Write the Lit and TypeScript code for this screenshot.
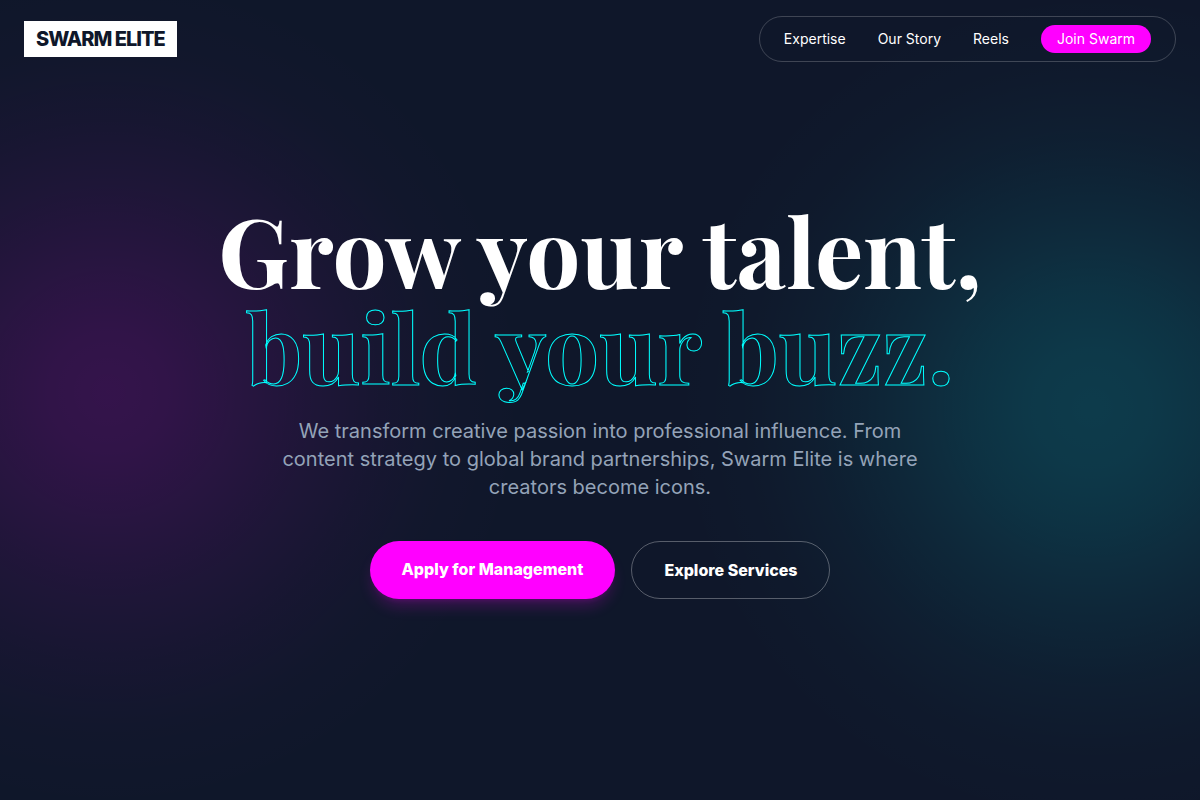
import { LitElement, html, css } from "lit";
import { customElement } from "lit/decorators.js";

@customElement("app-root")
export class AppRoot extends LitElement {
  static styles = css`
    :host {
      display: block;
      font-family: Inter, "Liberation Sans", sans-serif;
      color: #fff;
    }
    * {
      box-sizing: border-box;
    }
    a {
      color: inherit;
      text-decoration: none;
    }
    .page {
      display: grid;
      min-height: 100vh;
      background:
        radial-gradient(
          circle at 9% 49%,
          rgba(255, 0, 255, 0.155),
          rgba(255, 0, 255, 0.14) 60px,
          rgba(255, 0, 255, 0.11) 120px,
          rgba(255, 0, 255, 0.066) 200px,
          rgba(255, 0, 255, 0.034) 270px,
          rgba(255, 0, 255, 0.012) 340px,
          rgba(255, 0, 255, 0) 420px
        ),
        radial-gradient(
          circle at 91% 51%,
          rgba(0, 255, 255, 0.155),
          rgba(0, 255, 255, 0.145) 60px,
          rgba(0, 255, 255, 0.118) 120px,
          rgba(0, 255, 255, 0.072) 200px,
          rgba(0, 255, 255, 0.036) 270px,
          rgba(0, 255, 255, 0.013) 340px,
          rgba(0, 255, 255, 0) 420px
        ),
        #0f172a;
    }
    .header {
      grid-area: 1 / 1;
      align-self: start;
      display: flex;
      flex-wrap: wrap;
      gap: 16px;
      align-items: center;
      justify-content: space-between;
      padding: 16px 24px;
      z-index: 1;
    }
    .logo {
      padding: 4px 12px;
      background: #fff;
      color: #0f172a;
      font-size: 20px;
      line-height: 28px;
      font-weight: 800;
      letter-spacing: -1px;
    }
    .nav {
      display: flex;
      align-items: center;
      gap: 32px;
      padding: 8px 24px;
      border: 1px solid rgba(255, 255, 255, 0.2);
      border-radius: 24px;
      font-size: 14px;
      line-height: 20px;
    }
    .join {
      padding: 4px 16px;
      border-radius: 14px;
      background: #f0f;
    }
    .hero {
      grid-area: 1 / 1;
      display: flex;
      flex-direction: column;
      align-items: center;
      justify-content: center;
      padding: 80px 24px;
      text-align: center;
    }
    .title {
      margin: 0 0 24px;
      font-family: "Playfair Display", "DM Serif Display", "Liberation Serif", serif;
      font-size: 96px;
      line-height: 96px;
      font-weight: 700;
    }
    .line {
      display: block;
    }
    .outline {
      color: transparent;
      -webkit-text-stroke: 1px #00ffff;
    }
    .lead {
      max-width: 672px;
      margin: 0 0 40px;
      color: #94a3b8;
      font-size: 20px;
      line-height: 28px;
    }
    .actions {
      display: flex;
      flex-wrap: wrap;
      justify-content: center;
      gap: 16px;
      font-size: 16px;
      line-height: 24px;
      font-weight: 800;
    }
    .primary,
    .secondary {
      padding: 16px 32px;
      border-radius: 29px;
    }
    .primary {
      background: #f0f;
      box-shadow: 0 10px 15px -3px rgba(255, 0, 255, 0.2), 0 4px 6px -4px rgba(255, 0, 255, 0.2);
    }
    .secondary {
      border: 1px solid rgba(255, 255, 255, 0.3);
    }
  `;

  render() {
    return html`
      <div class="page">
        <header class="header">
          <a class="logo" href="#">SWARM ELITE</a>
          <nav class="nav" aria-label="Main">
            <a href="#expertise">Expertise</a>
            <a href="#story">Our Story</a>
            <a href="#reels">Reels</a>
            <a class="join" href="#join">Join Swarm</a>
          </nav>
        </header>
        <main class="hero">
          <h1 class="title">
            <span class="line">Grow your talent,</span>
            <span class="line outline">build your buzz.</span>
          </h1>
          <p class="lead">
            We transform creative passion into professional influence. From content strategy to
            global brand partnerships, Swarm Elite is where creators become icons.
          </p>
          <div class="actions">
            <a class="primary" href="#apply">Apply for Management</a>
            <a class="secondary" href="#services">Explore Services</a>
          </div>
        </main>
      </div>
    `;
  }
}
